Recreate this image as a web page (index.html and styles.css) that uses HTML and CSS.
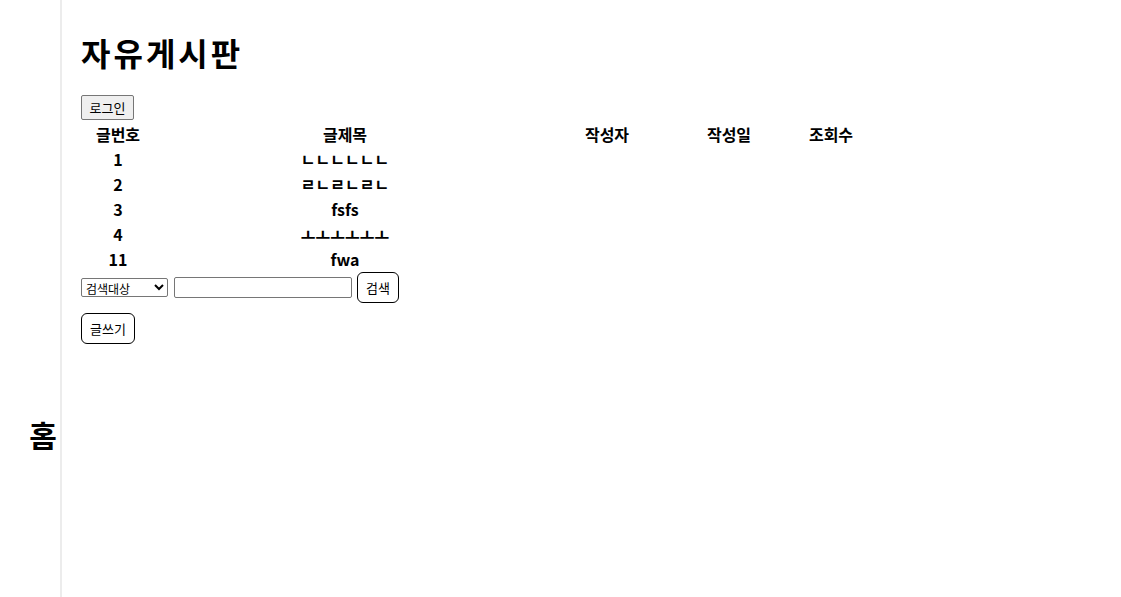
FILE: index.html
```html
<!DOCTYPE html>
<html lang="ko">
<head>
<meta charset="utf-8">
<title>자유게시판</title>
<link rel="stylesheet" href="styles.css">
</head>
<body>
<div class="layout">
  <aside class="sidebar">
    <h2 class="home">홈</h2>
  </aside>
  <main class="main">
    <h1 class="title">자유게시판</h1>
    <button class="btn-default" type="button">로그인</button>
    <table class="board">
      <thead>
        <tr>
          <th class="c-no">글번호</th>
          <th class="c-title">글제목</th>
          <th class="c-writer">작성자</th>
          <th class="c-date">작성일</th>
          <th class="c-views">조회수</th>
        </tr>
      </thead>
      <tbody>
        <tr><th>1</th><th>ㄴㄴㄴㄴㄴㄴ</th><th></th><th></th><th></th></tr>
        <tr><th>2</th><th>ㄹㄴㄹㄴㄹㄴ</th><th></th><th></th><th></th></tr>
        <tr><th>3</th><th>fsfs</th><th></th><th></th><th></th></tr>
        <tr><th>4</th><th>ㅗㅗㅗㅗㅗㅗ</th><th></th><th></th><th></th></tr>
        <tr><th>11</th><th>fwa</th><th></th><th></th><th></th></tr>
      </tbody>
    </table>
    <form class="search">
      <select class="select">
        <option>검색대상</option>
      </select>
      <input class="input" type="text">
      <button class="btn-round" type="button">검색</button>
    </form>
    <div class="write">
      <button class="btn-round" type="button">글쓰기</button>
    </div>
  </main>
</div>
</body>
</html>
```
FILE: styles.css
```css
html, body {
  margin: 0;
  padding: 0;
  background: #fff;
  color: #000;
  font-family: "Noto Sans CJK KR", "Noto Sans", sans-serif;
}
.layout {
  display: flex;
  min-height: 597px;
}
.sidebar {
  width: 62px;
  flex: none;
  border-right: 2px solid #ececec;
  display: flex;
  justify-content: center;
  padding: 412px 0 0 26px;
  box-sizing: border-box;
}
.home {
  margin: 0;
  font-size: 30px;
  font-weight: 700;
  line-height: 44px;
  height: 44px;
}
.main {
  padding: 29px 0 0 19px;
}
.title {
  font-size: 32px;
  font-weight: 700;
  margin: 0 0 19px;
  line-height: 46px;
  letter-spacing: 3px;
}
.btn-default {
  font-family: inherit;
  font-size: 13px;
  height: 25px;
  width: 53px;
  padding: 0;
  background: #efefef;
  border: 1px solid #767676;
  border-radius: 2px;
  line-height: 21px;
  color: #000;
}
.board {
  border-collapse: separate;
  border-spacing: 0;
  margin-top: 2px;
}
.board th {
  font-size: 16px;
  font-weight: 700;
  height: 25px;
  padding: 0;
  line-height: 25px;
  text-align: center;
}
.c-no { width: 74px; }
.c-title { width: 380px; }
.c-writer { width: 144px; }
.c-date { width: 100px; }
.c-views { width: 104px; }
.search {
  display: flex;
  align-items: center;
  gap: 5px;
  margin: 0;
}
.select {
  font-family: inherit;
  font-size: 12px;
  width: 87px;
  height: 19px;
  padding: 0;
  border: 1px solid #767676;
  border-radius: 2px;
  background: #fff;
  color: #000;
  margin-right: 1px;
}
.input {
  width: 178px;
  height: 21px;
  box-sizing: border-box;
  border: 1px solid #767676;
  border-radius: 2px;
  padding: 0 2px;
  font-family: inherit;
}
.btn-round {
  font-family: inherit;
  font-size: 13px;
  height: 31px;
  padding: 0 8px;
  background: #fff;
  border: 1px solid #000;
  border-radius: 6px;
  color: #000;
}
.write {
  margin-top: 10px;
}
```
